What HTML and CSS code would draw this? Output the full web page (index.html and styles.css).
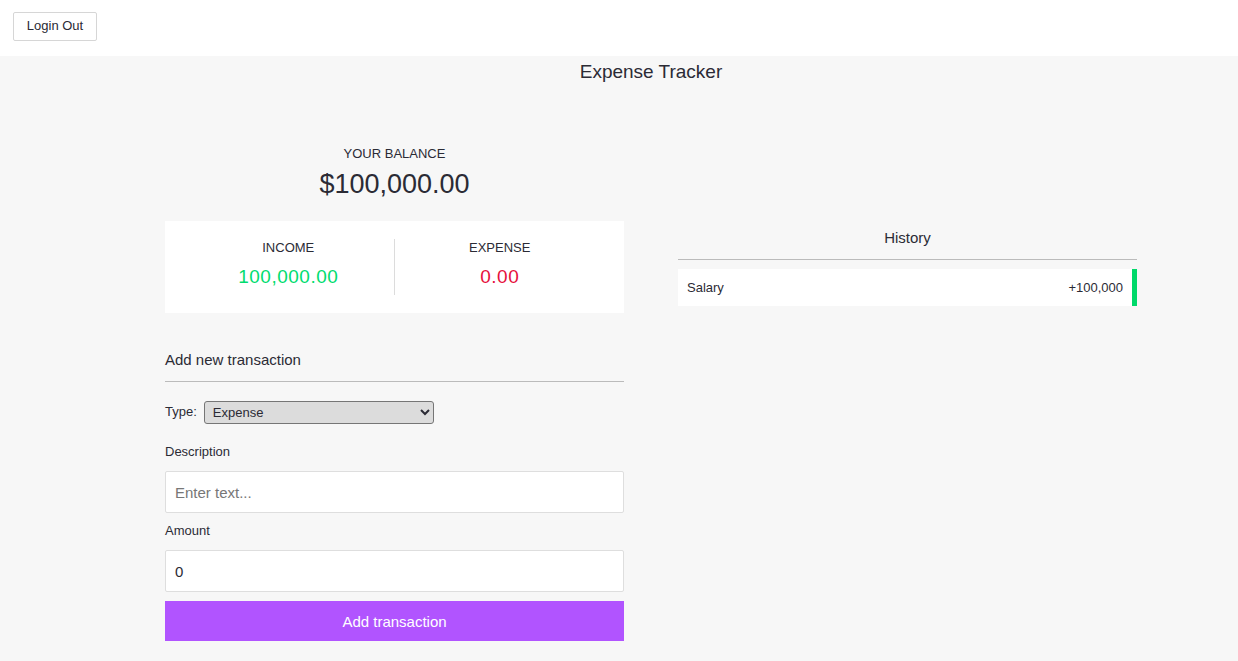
FILE: index.html
```html
<!DOCTYPE html>
<html lang="en">
<head>
<meta charset="utf-8">
<title>Expense Tracker</title>
<link rel="stylesheet" href="styles.css">
</head>
<body>
<header class="topbar">
  <button class="logout">Login Out</button>
</header>
<main class="main">
  <h1 class="title">Expense Tracker</h1>
  <div class="columns">
    <section class="left">
      <div class="balance">
        <h4 class="balance-label">YOUR BALANCE</h4>
        <div class="balance-value">$100,000.00</div>
      </div>
      <div class="inc-exp">
        <div class="box">
          <h4 class="box-label">INCOME</h4>
          <p class="money plus">100,000.00</p>
        </div>
        <div class="box">
          <h4 class="box-label">EXPENSE</h4>
          <p class="money minus">0.00</p>
        </div>
      </div>
      <h3 class="section-title">Add new transaction</h3>
      <form class="form">
        <div class="type-row">
          <label class="label">Type:</label>
          <select class="select">
            <option>Expense</option>
            <option>Income</option>
          </select>
        </div>
        <label class="label block first">Description</label>
        <input class="input" type="text" placeholder="Enter text...">
        <label class="label block">Amount</label>
        <input class="input" type="number" value="0">
        <button type="button" class="btn">Add transaction</button>
      </form>
    </section>
    <section class="right">
      <h3 class="history-title">History</h3>
      <ul class="list">
        <li class="item plus-item"><span>Salary</span><span>+100,000</span></li>
      </ul>
    </section>
  </div>
</main>
</body>
</html>
```
FILE: styles.css
```css
* { box-sizing: border-box; }
html, body { margin: 0; padding: 0; }
body {
  font-family: "Liberation Sans", Arial, sans-serif;
  color: #2b2b35;
  background: #f7f7f7;
  min-height: 661px;
}
.topbar {
  background: #fff;
  height: 56px;
  padding: 12px 13px;
}
.logout {
  font-family: "Liberation Sans", Arial, sans-serif;
  font-size: 13px;
  color: #2b2b35;
  background: #fff;
  border: 1px solid #d6d6d6;
  border-radius: 2px;
  width: 84px;
  height: 29px;
  padding: 0 0 2px;
  cursor: pointer;
}
.main {
  padding-left: 64px;
}
.title {
  margin: 0;
  padding-top: 5px;
  font-size: 19px;
  font-weight: 400;
  text-align: center;
  line-height: 22px;
}
.columns {
  width: 972px;
  margin: 0 auto;
  display: flex;
  gap: 54px;
}
.left, .right { width: 459px; }
.left { padding-top: 62px; }
.balance { text-align: center; }
.balance-label {
  margin: 0;
  font-size: 13px;
  font-weight: 400;
  line-height: 18px;
}
.balance-value {
  font-size: 27px;
  line-height: 30px;
  margin-top: 6px;
}
.inc-exp {
  margin-top: 22px;
  background: #fff;
  height: 92px;
  display: flex;
  align-items: center;
  padding: 18px 19px 18px 18px;
}
.box {
  flex: 1;
  text-align: center;
  height: 56px;
}
.box:first-child { border-right: 1px solid #dcdcdc; }
.box-label {
  margin: 0;
  font-size: 13px;
  font-weight: 400;
  line-height: 18px;
}
.money {
  margin: 9px 0 0;
  font-size: 19px;
  line-height: 22px;
  letter-spacing: 0.5px;
}
.plus { color: #00dc6e; }
.minus { color: #e6103c; }
.section-title {
  margin: 38px 0 0;
  font-size: 15px;
  font-weight: 400;
  line-height: 18px;
  padding-bottom: 12px;
  border-bottom: 1px solid #bbb;
}
.form { margin-top: 18px; }
.type-row {
  display: flex;
  align-items: center;
  height: 24px;
}
.label {
  font-size: 13px;
  line-height: 18px;
}
.type-row .label { margin-right: 7px; }
.select {
  width: 230px;
  height: 23px;
  font-family: "Liberation Sans", Arial, sans-serif;
  font-size: 13px;
  color: #2b2b35;
  background: #dcdcdc;
  border: 1px solid #767676;
  border-radius: 3px;
  padding: 0 4px;
}
.label.block {
  display: block;
  margin-top: 9px;
  margin-bottom: 10px;
}
.label.block.first { margin-top: 19px; }
.input {
  display: block;
  width: 100%;
  height: 42px;
  border: 1px solid #dedede;
  border-radius: 2px;
  background: #fff;
  font-family: "Liberation Sans", Arial, sans-serif;
  font-size: 15px;
  color: #2b2b35;
  padding: 0 9px;
  outline: none;
}
.input::placeholder { color: #777; }
.btn {
  display: block;
  width: 100%;
  height: 40px;
  margin-top: 9px;
  background: #b154ff;
  color: #fff;
  border: 0;
  font-family: "Liberation Sans", Arial, sans-serif;
  font-size: 15px;
  cursor: pointer;
}
.right { padding-top: 146px; }
.history-title {
  margin: 0;
  text-align: center;
  font-size: 15px;
  font-weight: 400;
  line-height: 18px;
  padding-bottom: 12px;
  border-bottom: 1px solid #bbb;
}
.list {
  list-style: none;
  margin: 9px 0 0;
  padding: 0;
}
.item {
  background: #fff;
  height: 37px;
  display: flex;
  justify-content: space-between;
  align-items: center;
  padding: 0 9px;
  font-size: 13px;
}
.plus-item { border-right: 5px solid #00d96a; }
```
